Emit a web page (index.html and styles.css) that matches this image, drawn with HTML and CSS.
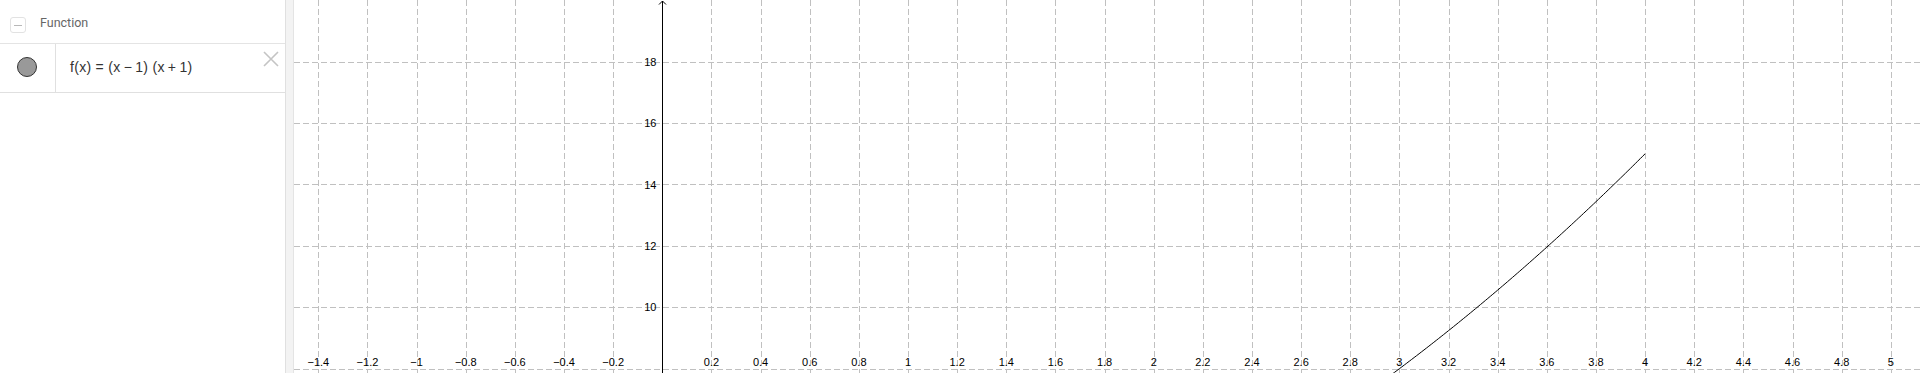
FILE: index.html
```html
<!DOCTYPE html>
<html>
<head>
<meta charset="utf-8">
<title>Function</title>
<link rel="stylesheet" href="styles.css">
</head>
<body>
<div id="app">
	<div id="algebra">
		<div class="group-head">
			<span class="collapse"><span class="collapse-bar"></span></span>
			<span class="group-title">Function</span>
		</div>
		<div class="item">
			<div class="marble-cell"><span class="marble"></span></div>
			<div class="formula">f(x)&nbsp;=&nbsp;(x&thinsp;&minus;&thinsp;1)&nbsp;(x&thinsp;+&thinsp;1)</div>
			<svg class="close" width="16" height="16" viewBox="0 0 16 16"><path d="M1 1L15 15M15 1L1 15" stroke="#c4c4c4" stroke-width="1.6" fill="none"/></svg>
		</div>
	</div>
	<div id="splitter"></div>
	<div id="graphics">
		<svg id="plot" width="1626" height="373"></svg>
	</div>
</div>
<script src="plot.js"></script>
</body>
</html>
```

FILE: styles.css
```css
html, body{margin:0; padding:0; background:#fff}
body{font-family:"Liberation Sans", Arial, sans-serif; overflow:hidden}
#app{display:flex; width:1920px; height:373px}

#algebra{width:285px; border-right:1px solid #e0e0e0; flex:none}
.group-head{height:44px; box-sizing:border-box; border-bottom:1px solid #e4e4e4;
	display:flex; align-items:flex-start; padding:17px 0 0 10px}
.collapse{width:14px; height:14px; border:1px solid #e2e2e2; border-radius:3px;
	display:flex; align-items:center; justify-content:center}
.collapse-bar{width:8px; height:1px; background:#b8b8b8}
.group-title{margin-left:14px; font-family:Roboto, "Liberation Sans", sans-serif; font-size:12.5px;
	line-height:16px; color:#666; margin-top:-2px}

.item{height:49px; box-sizing:border-box; border-bottom:1px solid #e0e0e0; display:flex}
.marble-cell{width:56px; border-right:1px solid #e0e0e0; display:flex; align-items:center;
	justify-content:center; padding-bottom:3px; box-sizing:border-box}
.marble{width:18px; height:18px; border-radius:50%; background:#999; border:1px solid #333; margin-left:-1px}
.formula{flex:1; padding-left:14px; display:flex; align-items:center; font-size:14px; color:#333;
	padding-bottom:2px; letter-spacing:0.3px}
.close{flex:none; margin:7px 6px 0 0}

#splitter{width:7px; background:#f3f3f3; border-right:1px solid #e4e4e4; flex:none}
#graphics{flex:1; overflow:hidden}
#plot{display:block}
.grid{stroke:#c0c0c0; stroke-width:1; stroke-dasharray:6 3; shape-rendering:crispEdges}
.axis{stroke:#000; stroke-width:1; fill:none}
.lbl{font-family:"Liberation Sans", Arial, sans-serif; font-size:11px; fill:#000}
.curve{stroke:#000; stroke-width:1; fill:none}
```

FILE: plot.js
```js
var ns = 'http://www.w3.org/2000/svg';
var svg = document.getElementById('plot');
var W = 1626, H = 373;
// screen = origin + value * scale
var ox = 368.3, oy = 614.3, sx = 245.7, sy = 30.7;

function X(u){ return ox + u * sx; }
function Y(v){ return oy - v * sy; }

function el(name, attrs, text){
	var e = document.createElementNS(ns, name);
	for (var k in attrs) e.setAttribute(k, attrs[k]);
	if (text) e.textContent = text;
	svg.appendChild(e);
	return e;
}

function fmt(n){
	var s = (Math.round(n * 10) / 10).toString();
	return n < 0 ? '\u2212' + s.substring(1) : s;
}

/* grid */
for (var i = -7; i <= 26; i++){
	var x = Math.round(X(i * 0.2)) + 0.5;
	if (x < 0 || x > W || i == 0) continue;
	el('line', {x1:x, y1:0, x2:x, y2:H, 'class':'grid'});
}
for (var v = 8; v <= 18; v += 2){
	var y = Math.round(Y(v)) + 0.5;
	el('line', {x1:0, y1:y, x2:W, y2:y, 'class':'grid'});
}

/* y axis */
var ax = Math.round(ox) + 0.5;
el('line', {x1:ax, y1:1, x2:ax, y2:H, 'class':'axis'});
el('path', {d:'M' + (ax - 3.5) + ' 4.5L' + ax + ' 1L' + (ax + 3.5) + ' 4.5', 'class':'axis'});

/* labels */
for (var i = -7; i <= 25; i++){
	if (i == 0) continue;
	var u = i * 0.2;
	var x = X(u);
	if (x > W - 4) continue;
	el('text', {x:x, y:366, 'text-anchor':'middle', 'class':'lbl'}, fmt(u));
}
for (var v = 10; v <= 18; v += 2){
	el('text', {x:ax - 6, y:Y(v) + 4, 'text-anchor':'end', 'class':'lbl'}, fmt(v));
}

/* f(x) = (x - 1)(x + 1) */
var pts = [];
for (var u = 2.95; u <= 4.0001; u += 0.01){
	pts.push(X(u).toFixed(2) + ',' + Y((u - 1) * (u + 1)).toFixed(2));
}
el('polyline', {points:pts.join(' '), 'class':'curve'});
```
